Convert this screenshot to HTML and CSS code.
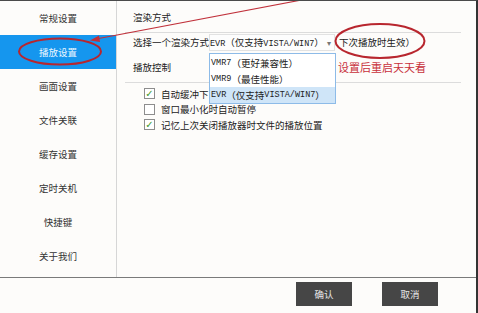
FILE: index.html
```html
<!DOCTYPE html>
<html lang="zh-CN">
<head>
    <meta charset="UTF-8"><title>设置</title>
    <link rel="stylesheet" href="styles.css">
</head>
<body>
<div class="window">
    <div class="main">
        <div class="sidebar">
            <div class="navItem">常规设置</div>
            <div class="navItem active">播放设置</div>
            <div class="navItem">画面设置</div>
            <div class="navItem">文件关联</div>
            <div class="navItem">缓存设置</div>
            <div class="navItem">定时关机</div>
            <div class="navItem">快捷键</div>
            <div class="navItem">关于我们</div>
        </div>

        <div class="content">
            <div class="sectionTitle">渲染方式</div>
            <div class="rule"></div>
            <div class="selectRow">
                <div class="label">选择一个渲染方式</div>
                <div class="selectBox">
                    <span><span class="latin">EVR</span>（仅支持<span class="latin">VISTA/WIN7</span>）</span>
                    <span class="arrow">▾</span>
                </div>
                <div class="hint">下次播放时生效）</div>
            </div>
            <div class="sectionTitle">
                <div class="label wide">播放控制</div>
                <div class="note">设置后重启天天看</div>
            </div>
            <div class="rule"></div>
            <div class="checkList">
                <div class="checkRow"><span class="box checked">✓</span>自动缓冲下</div>
                <div class="checkRow"><span class="box"></span>窗口最小化时自动暂停</div>
                <div class="checkRow"><span class="box checked">✓</span>记忆上次关闭播放器时文件的播放位置</div>
            </div>
        </div>
    </div>

    <div class="footer">
        <div class="button">确认</div>
        <div class="button">取消</div>
    </div>

    <div class="dropList">
        <div class="option"><span class="latin">VMR7</span>（更好兼容性）</div>
        <div class="option"><span class="latin">VMR9</span>（最佳性能）</div>
        <div class="option selected"><span class="latin">EVR</span>（仅支持<span class="latin">VISTA/WIN7</span>）</div>
    </div>

    <svg class="marks" width="478" height="313" viewBox="0 0 478 313">
        <ellipse cx="60" cy="51.5" rx="41" ry="13" fill="none" stroke="#b8262e" stroke-width="2"/>
        <ellipse cx="380" cy="41" rx="44.5" ry="17" fill="none" stroke="#b8262e" stroke-width="2"/>
        <line x1="96" y1="39" x2="312" y2="-2" stroke="#c0303a" stroke-width="1.1"/>
        <polygon points="90,40.5 99,35.5 100,42" fill="#c0303a"/>
    </svg>
</div>
</body>
</html>
```

FILE: styles.css
```css
html {
    font-family: "Noto Sans CJK SC", "Noto Sans", sans-serif;
    font-size: 9.5px;
}
body {
    margin: 0;
    background-color: #fdfcfa;
    color: #222;
}
.window {
    position: relative;
    display: flex;
    flex-direction: column;
    width: 478px;
    height: 313px;
    box-sizing: border-box;
    border-top: 1px solid #4a4a4a;
    border-right: 2px solid #333;
    overflow: hidden;
    white-space: nowrap;
}
.main {
    display: flex;
    height: 276px;
    border-bottom: 1px solid #7a7a7a;
}
.sidebar {
    display: flex;
    flex-direction: column;
    width: 116px;
    border-right: 1px solid #d6d6d6;
}
.navItem {
    display: flex;
    justify-content: center;
    align-items: center;
    height: 34px;
    color: #333;
}
.navItem.active {
    background-color: #1596ee;
    color: #eaf6ff;
}
.content {
    display: flex;
    flex-direction: column;
    flex: 1;
    padding-left: 16px;
}
.sectionTitle {
    display: flex;
    align-items: center;
    height: 31px;
}
.rule {
    width: 336px;
    height: 1px;
    margin-left: -8px;
    background-color: #dcdcdc;
}
.selectRow {
    display: flex;
    align-items: center;
    height: 18px;
}
.label {
    width: 76px;
}
.label.wide {
    width: 205px;
}
.selectBox {
    display: flex;
    justify-content: space-between;
    align-items: center;
    box-sizing: border-box;
    width: 126px;
    height: 17px;
    padding: 0 3px 0 0;
    border: 1px solid #e2e2e2;
    background-color: #fdfdfd;
}
.arrow {
    color: #777;
    font-size: 8px;
}
.latin {
    font-family: "Liberation Mono", monospace;
    font-size: 8.5px;
}
.hint {
    margin-left: 4px;
}
.note {
    color: #c8303a;
    font-size: 11px;
}
.checkList {
    display: flex;
    flex-direction: column;
    padding: 3px 0 0 11px;
}
.checkRow {
    display: flex;
    align-items: center;
    column-gap: 6px;
    height: 15.5px;
}
.box {
    display: flex;
    justify-content: center;
    align-items: center;
    box-sizing: border-box;
    width: 11px;
    height: 11px;
    border: 1px solid #8d8d8d;
    background-color: #fff;
    color: #3b9a2e;
    font-size: 10px;
    font-weight: bold;
    font-family: "DejaVu Sans", sans-serif;
}
.footer {
    display: flex;
    justify-content: flex-end;
    column-gap: 30px;
    padding: 4px 38px 0 0;
}
.button {
    display: flex;
    justify-content: center;
    align-items: center;
    width: 56px;
    height: 24px;
    background-color: #464646;
    color: #e6e6e6;
}
.dropList {
    position: absolute;
    left: 209px;
    top: 52px;
    display: flex;
    flex-direction: column;
    justify-content: flex-end;
    box-sizing: border-box;
    width: 127px;
    height: 51px;
    border: 1px solid #8dbbe8;
    background-color: #fff;
}
.option {
    display: flex;
    align-items: center;
    height: 16px;
    padding-left: 1px;
}
.option.selected {
    background-color: #cfe5f8;
}
.marks {
    position: absolute;
    left: 0;
    top: -1px;
    pointer-events: none;
}
```
